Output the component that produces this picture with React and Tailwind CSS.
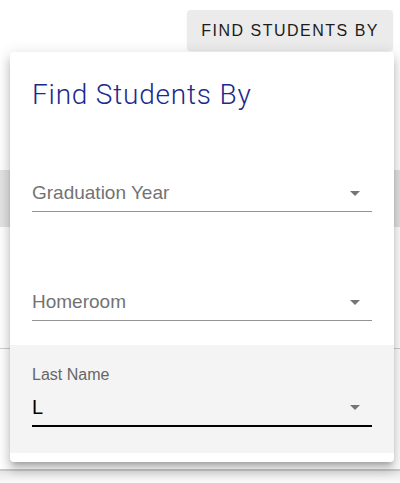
import React from "react";

const sans = { fontFamily: '"Liberation Sans", Arial, sans-serif' };

// Little triangle used by each select (same path as the material arrow_drop_down)
function DropArrow() {
  return (
    <svg viewBox="0 0 24 24" className="w-6 h-6 fill-[#757575]">
      <path d="M7 10l5 5 5-5z" />
    </svg>
  );
}

function SelectField({ label, className }) {
  return (
    <div
      className={
        "flex items-center justify-between border-b border-[#949494] pb-[6px] " +
        className
      }>
      <span className="text-[19px] leading-6 text-[#737373]">{label}</span>
      <span className="-my-2 mr-[5px]">
        <DropArrow />
      </span>
    </div>
  );
}

export default function App() {
  return (
    <div
      className="relative w-[400px] h-[483px] overflow-hidden bg-white"
      style={sans}>
      {/* page underneath the popover */}
      <div className="flex justify-end pt-[10px] pr-[7px]">
        <button className="h-[41px] px-[14px] rounded bg-[#ebebeb] text-[16px] tracking-[1.5px] text-[#1c1c1c] shadow-[0_1px_2px_rgba(0,0,0,0.06)]">
          FIND STUDENTS BY
        </button>
      </div>
      <div className="mt-[119px] h-[57px] bg-[#e4e4e4]" />
      <div className="mt-[121px] h-px bg-[#cfcfcf]" />
      <div className="mt-[120px] h-[2px] bg-[#c9c9c9]" />
      <div className="h-[12px] bg-gradient-to-b from-[#e6e6e6] to-[#fafafa]" />

      {/* popover */}
      <div className="absolute left-[10px] top-[52px] w-[384px] h-[410px] rounded bg-white shadow-[0_5px_5px_-3px_rgba(0,0,0,0.2),0_8px_10px_1px_rgba(0,0,0,0.14),0_3px_14px_2px_rgba(0,0,0,0.12)]">
        <div className="px-[22px]">
          <h2
            className="pt-[27px] text-[28px] leading-8 font-light tracking-[0.8px] text-[#1c2a8c]"
            style={{ fontFamily: 'Roboto, "Liberation Sans", sans-serif' }}>
            Find Students By
          </h2>
          <SelectField label="Graduation Year" className="mt-[70px]" />
          <SelectField label="Homeroom" className="mt-[78px]" />
        </div>
        <div className="mt-[24px] bg-[#f4f4f4] px-[22px] pt-[20px] pb-[26px]">
          <div className="text-[16px] leading-5 text-[#666666]">Last Name</div>
          <div className="mt-[9px] flex items-center justify-between border-b-2 border-black pb-[5px]">
            <span className="text-[20px] leading-[26px] text-black">L</span>
            <span className="-my-2 mr-[5px]">
              <DropArrow />
            </span>
          </div>
        </div>
      </div>
    </div>
  );
}
